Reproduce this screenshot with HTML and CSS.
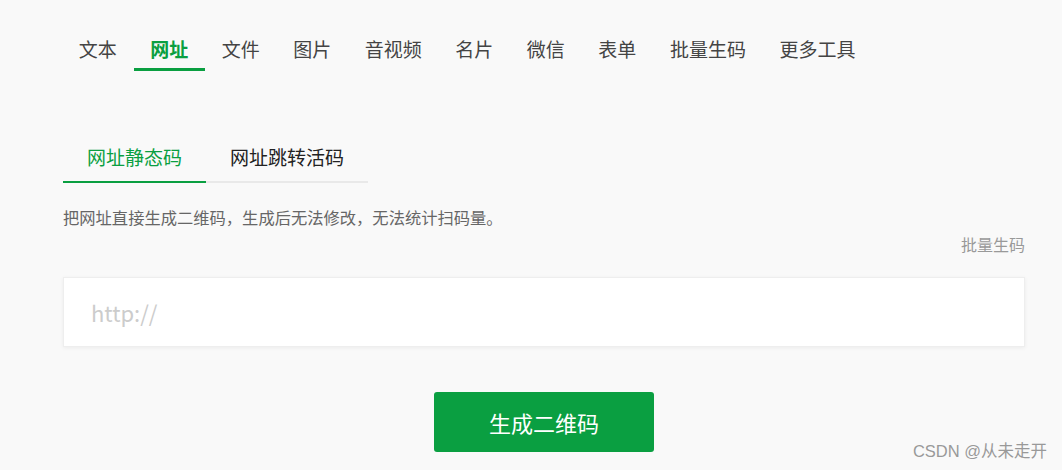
FILE: index.html
```html
<!DOCTYPE html>
<html lang="zh-CN">
<head>
<meta charset="utf-8">
<title>网址二维码</title>
<link rel="stylesheet" href="styles.css">
</head>
<body>
<div class="page">
  <nav class="nav">
    <a class="nav-item">文本</a>
    <a class="nav-item active">网址</a>
    <a class="nav-item">文件</a>
    <a class="nav-item">图片</a>
    <a class="nav-item">音视频</a>
    <a class="nav-item">名片</a>
    <a class="nav-item">微信</a>
    <a class="nav-item">表单</a>
    <a class="nav-item">批量生码</a>
    <a class="nav-item">更多工具</a>
  </nav>
  <main class="content">
    <div class="tabs">
      <div class="tab active">网址静态码</div>
      <div class="tab">网址跳转活码</div>
    </div>
    <p class="desc">把网址直接生成二维码，生成后无法修改，无法统计扫码量。</p>
    <div class="batch-row"><a class="batch">批量生码</a></div>
    <div class="input-box"><input class="url-input" type="text" placeholder="http://"></div>
    <div class="btn-row"><button class="btn">生成二维码</button></div>
  </main>
  <div class="watermark">CSDN @从未走开</div>
</div>
</body>
</html>
```

FILE: styles.css
```css
* { box-sizing: border-box; }
html, body {
  margin: 0;
  padding: 0;
  background: #f9f9f9;
  font-family: "Noto Sans CJK SC", "Noto Sans", sans-serif;
  color: #333;
}
.page {
  position: relative;
  width: 1062px;
  height: 470px;
  overflow: hidden;
}
.nav {
  display: flex;
  padding: 30px 0 0 62px;
}
.nav-item {
  display: block;
  padding: 0 16.75px;
  font-size: 19px;
  line-height: 38px;
  color: #444;
  border-bottom: 3px solid transparent;
  cursor: pointer;
}
.nav-item.active {
  color: #0a9f41;
  font-weight: bold;
  border-bottom-color: #0a9f41;
}
.content {
  margin: 62px 0 0 63px;
  width: 962px;
}
.tabs {
  display: flex;
  width: 305px;
  border-bottom: 2px solid #e9e9e9;
}
.tab {
  padding: 0 24px;
  font-size: 19px;
  line-height: 48px;
  color: #222;
  margin-bottom: -2px;
  border-bottom: 2px solid transparent;
}
.tab.active {
  color: #0a9f41;
  border-bottom-color: #0a9f41;
}
.desc {
  margin: 22px 0 0 0;
  font-size: 16.3px;
  line-height: 24px;
  color: #666;
}
.batch-row {
  display: flex;
  justify-content: flex-end;
  margin-top: 3px;
}
.batch {
  font-size: 16px;
  line-height: 24px;
  color: #999;
}
.input-box {
  margin-top: 21px;
  height: 70px;
  background: #fff;
  border: 1px solid #eeeeee;
  box-shadow: 0 1px 4px rgba(0, 0, 0, 0.06);
  display: flex;
  align-items: center;
  padding-left: 27px;
}
.url-input {
  border: none;
  outline: none;
  background: transparent;
  width: 100%;
  font-family: "Noto Sans CJK SC", "Noto Sans", sans-serif;
  font-size: 22px;
  color: #333;
  padding: 0;
}
.url-input::placeholder { color: #cccccc; }
.btn-row {
  display: flex;
  justify-content: center;
  margin-top: 45px;
}
.btn {
  width: 220px;
  height: 60px;
  border: none;
  border-radius: 3px;
  background: #0a9f41;
  color: #fff;
  font-family: "Noto Sans CJK SC", sans-serif;
  font-size: 22px;
  cursor: pointer;
}
.watermark {
  position: absolute;
  right: 15px;
  top: 440px;
  font-family: "Liberation Sans", "Noto Sans CJK SC", sans-serif;
  font-size: 16.5px;
  line-height: 22px;
  color: #999;
}
```
